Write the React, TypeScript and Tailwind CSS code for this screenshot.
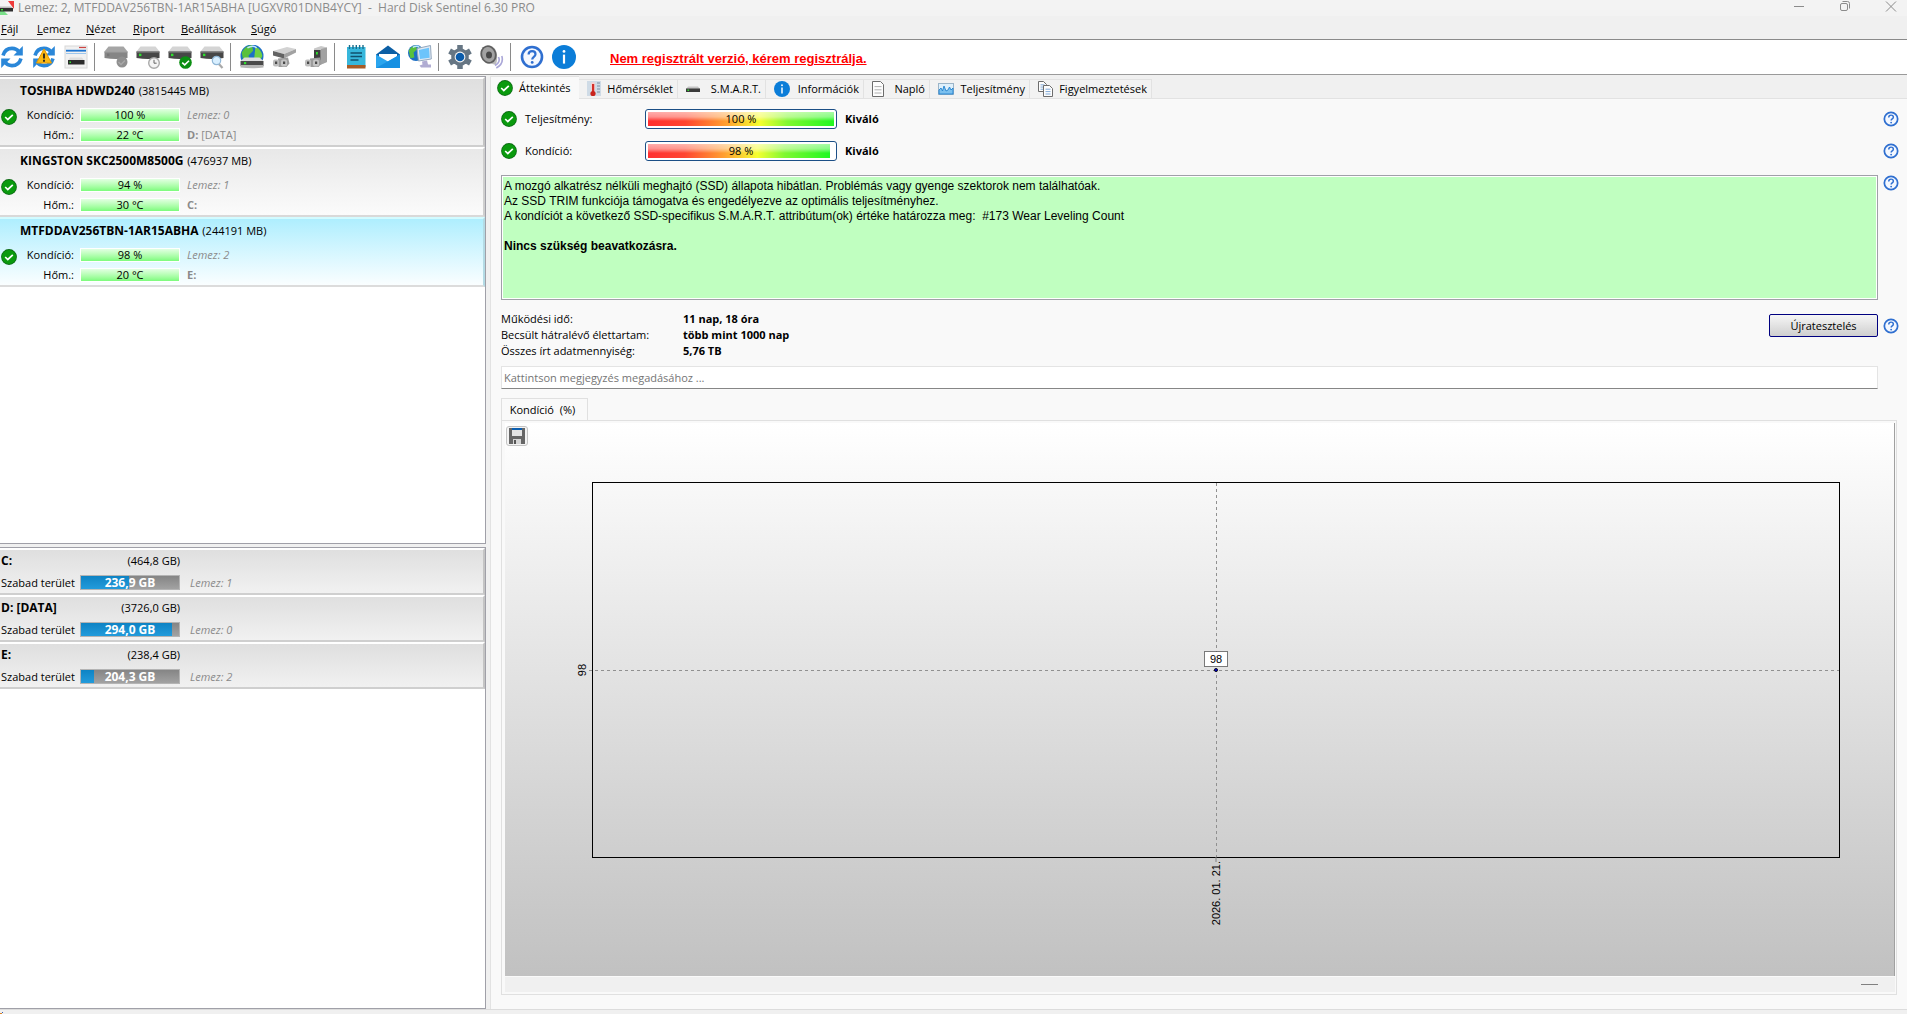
import React from 'react';

type Disk = {
  name: string;
  size: string;
  health: string;
  temp: string;
  index: number;
  letter: string;
  volume?: string;
  tone: string;
};

const disks: Disk[] = [
  { name: 'TOSHIBA HDWD240', size: '3815445 MB', health: '100 %', temp: '22 °C', index: 0, letter: 'D:', volume: '[DATA]', tone: 'from-[#dfdfdf] to-[#f1f1f1] border-b-[#cfcfcf] border-r-[#c4c4c4] border-t-white' },
  { name: 'KINGSTON SKC2500M8500G', size: '476937 MB', health: '94 %', temp: '30 °C', index: 1, letter: 'C:', tone: 'from-[#e8e8e8] to-[#fbfbfb] border-b-[#d9d9d9] border-r-[#cfcfcf] border-t-white' },
  { name: 'MTFDDAV256TBN-1AR15ABHA', size: '244191 MB', health: '98 %', temp: '20 °C', index: 2, letter: 'E:', tone: 'from-[#aeeefe] to-[#fafeff] border-b-[#dcdcdc] border-r-[#b4dbe5] border-t-[#d3fbff]' },
];

const volumes = [
  { name: 'C:', size: '(464,8 GB)', free: '236,9 GB', index: 1, fill: 49 },
  { name: 'D: [DATA]', size: '(3726,0 GB)', free: '294,0 GB', index: 0, fill: 93 },
  { name: 'E:', size: '(238,4 GB)', free: '204,3 GB', index: 2, fill: 13 },
];

const menus = [
  { key: 'F', rest: 'ájl', width: 'w-9' },
  { key: 'L', rest: 'emez', width: 'w-[49px]' },
  { key: 'N', rest: 'ézet', width: 'w-[47px]' },
  { key: 'R', rest: 'iport', width: 'w-12' },
  { key: 'B', rest: 'eállítások', width: 'w-[70px]' },
  { key: 'S', rest: 'úgó', width: 'w-9' },
];

const CheckIcon: React.FC<{ className?: string }> = ({ className = '' }) => (
  <svg viewBox="0 0 16 16" className={`h-4 w-4 shrink-0 ${className}`}>
    <circle cx="8" cy="8" r="7.9" fill="#0c6b14" />
    <circle cx="8" cy="8" r="7.1" fill="#0a9a0e" />
    <path d="M4.2 8l2.6 2.5 5-4.6" fill="none" stroke="#fff" strokeWidth="1.7" />
  </svg>
);

const HelpIcon: React.FC<{ className?: string }> = ({ className = 'h-4 w-4' }) => (
  <svg viewBox="0 0 24 24" className={className}>
    <circle cx="12" cy="12" r="10" fill="#f4f8ff" stroke="#2f6fd0" strokeWidth="2.6" />
    <path d="M8.6 9.6c0-2.1 1.5-3.4 3.5-3.4s3.4 1.2 3.4 3c0 2.6-3.3 2.7-3.3 5.2" fill="none" stroke="#2f6fd0" strokeWidth="2.2" />
    <circle cx="12.2" cy="17.4" r="1.4" fill="#2f6fd0" />
  </svg>
);

const InfoIcon: React.FC<{ className?: string }> = ({ className = 'h-4 w-4' }) => (
  <svg viewBox="0 0 24 24" className={className}>
    <circle cx="12" cy="12" r="12" fill="#0b7dd8" />
    <circle cx="12" cy="6.4" r="1.4" fill="#fff" />
    <path d="M12 9.6v9" stroke="#fff" strokeWidth="2.2" />
  </svg>
);

const Arrows = () => (
  <g fill="none" stroke="#2b87d8" strokeWidth="3.6">
    <path d="M3 10.5C4.4 5.6 8 3.4 12 3.4c3 0 5.6 1.3 7.2 3.8" />
    <path d="M21 13.5c-1.4 4.9-5 7.1-9 7.1-3 0-5.6-1.3-7.2-3.8" />
    <path d="M22.8 1v9.5h-9.3z" fill="#2b87d8" stroke="none" />
    <path d="M1.2 23v-9.5h9.3z" fill="#2b87d8" stroke="none" />
  </g>
);

const Drive = ({ grey = false }: { grey?: boolean }) => (
  <g>
    <path d="M4.5 1.5h15l4 5h-23z" fill={grey ? '#a5a5a5' : '#d4d4d4'} />
    <path d="M.5 6.5h23v6.5q-11.5 2.2-23 0z" fill={grey ? '#858585' : '#474747'} />
    <path d="M.5 6.5h23v1.2h-23z" fill={grey ? '#999' : '#777'} />
    <rect x="3" y="8.7" width="2.4" height="2.4" fill={grey ? '#777' : '#2fe02f'} />
  </g>
);

const Globe = ({ cx = 12, cy = 9.5, r = 9.5 }) => (
  <g>
    <circle cx={cx} cy={cy} r={r} fill="#1d6fc4" />
    <path d={`M${cx - r * 0.9} ${cy - r * 0.3}q${r * 0.3} ${-r * 0.6} ${r * 0.9} ${-r * 0.65}l${r * 0.1} ${r * 0.5}l${-r * 0.4} ${r * 0.4}l${r * 0.1} ${r * 0.6}l${-r * 0.5} ${r * 0.1}z`} fill="#59c13c" />
    <path d={`M${cx + r * 0.3} ${cy - r * 0.8}q${r * 0.5} ${r * 0.2} ${r * 0.6} ${r * 0.8}l${-r * 0.3} ${r * 0.6}l${-r * 0.4} ${-r * 0.5}z`} fill="#6fd043" />
    <path d={`M${cx - r * 0.4} ${cy - r * 0.7}q${r * 0.5} ${-r * 0.3} ${r * 0.8} 0`} stroke="#bfe6ff" strokeWidth="1.5" fill="none" />
  </g>
);

const Usb = () => (
  <g>
    <path d="M6 13.5l10-1 1.5 6-3 3.5h-8z" fill="#9c9c9c" />
    <rect x="1" y="14.5" width="6" height="7" rx="2" fill="#bdbdbd" />
    <rect x="9" y="14.5" width="6" height="7" rx="2" fill="#c4c4c4" />
    <rect x="3" y="16.5" width="2.2" height="2.5" fill="#4a4a4a" />
    <rect x="11" y="16.5" width="2.2" height="2.5" fill="#4a4a4a" />
  </g>
);

const toolGroups: { label: string; art: React.ReactNode }[][] = [
  [
    { label: 'Frissítés', art: <Arrows /> },
    {
      label: 'Figyelmeztetés frissítése',
      art: (
        <>
          <Arrows />
          <path d="M12 4l7.5 14h-15z" fill="#fdb913" stroke="#e79a00" strokeWidth="1" strokeLinejoin="round" />
          <path d="M12 8.5v5M12 14.8v2" stroke="#222" strokeWidth="1.8" />
        </>
      ),
    },
    {
      label: 'Panel',
      art: (
        <>
          <rect x="1" y="1" width="22" height="22" fill="#f1f1f1" stroke="#d8d8d8" />
          <path d="M15 2.5h7" stroke="#c44" strokeWidth="1.2" />
          <path d="M2 5.7h20" stroke="#1c74d0" strokeWidth="1.8" />
          <path d="M2 8.5h20" stroke="#9cc6ee" strokeWidth="1" />
          <path d="M6 12.5h12l2 3h-16z" fill="#ddd" />
          <rect x="4" y="15" width="16.5" height="4.5" fill="#2c2c2c" />
          <rect x="5.5" y="16.5" width="1.5" height="1.5" fill="#2fe02f" />
        </>
      ),
    },
  ],
  [
    {
      label: 'Lemez',
      art: (
        <>
          <Drive grey />
          <circle cx="18" cy="17" r="5.5" fill="#8f8f8f" />
          <path d="M14.5 17l2.5 2.5 4-4" stroke="#a8a8a8" strokeWidth="1.5" fill="none" />
        </>
      ),
    },
    {
      label: 'Időzített teszt',
      art: (
        <>
          <Drive />
          <circle cx="18" cy="18" r="5.3" fill="#f4f4f4" stroke="#a9a9a9" strokeWidth="1.4" />
          <path d="M18 14.8v3.4h2.6" stroke="#666" fill="none" />
        </>
      ),
    },
    {
      label: 'Gyors teszt',
      art: (
        <>
          <Drive />
          <circle cx="17.5" cy="17.5" r="6.3" fill="#0b8f12" />
          <path d="M14.2 17.6l2.5 2.3 4.3-4.2" stroke="#fff" strokeWidth="1.6" fill="none" />
        </>
      ),
    },
    {
      label: 'Felület teszt',
      art: (
        <>
          <Drive />
          <path d="M18.5 18.5l4 4.5" stroke="#a9a9a9" strokeWidth="2.2" />
          <circle cx="16.5" cy="15.5" r="4.2" fill="#d8efff" stroke="#8fb6d6" strokeWidth="1.2" />
        </>
      ),
    },
  ],
  [
    {
      label: 'Hálózat',
      art: (
        <>
          <Globe cx={12} cy={11} r={11.5} />
          <path d="M4.5 12.5h15l4 3.500h-23z" fill="#dcdcdc" />
          <path d="M.5 16h23v5h-23z" fill="#4a4a4a" />
          <path d="M.5 20h23v2.5q-11.5 1.5-23 0z" fill="#b5b5b5" />
          <rect x="4" y="17" width="2.2" height="2.2" fill="#2fe02f" />
        </>
      ),
    },
    {
      label: 'USB lemez',
      art: (
        <>
          <path d="M1 6l14-4 9 2-12 5z" fill="#d2d2d2" />
          <path d="M1 6l11 3v4.5l-11-3z" fill="#636363" />
          <path d="M12 9l12-5v3.5l-12 6z" fill="#a2a2a2" />
          <Usb />
        </>
      ),
    },
    {
      label: 'Külső lemez',
      art: (
        <>
          <path d="M10 3.5l7-2.5 6 1.5v14.5l-7 3-6-3z" fill="#c9c9c9" />
          <path d="M17 4l6-1.5v14.5l-7 3z" fill="#a2a2a2" />
          <rect x="10" y="5" width="6.5" height="10.5" fill="#3f3f3f" />
          <rect x="12" y="7" width="1.8" height="2.5" fill="#2fe02f" />
          <Usb />
        </>
      ),
    },
  ],
  [
    {
      label: 'Riport',
      art: (
        <>
          <rect x="3" y="2" width="18.5" height="20" fill="#37b7dc" />
          <rect x="3" y="20" width="18.5" height="3.5" fill="#a85b26" />
          <path d="M5.5 0v4M9 0v4M12.3 0v4M15.6 0v4M19 0v4" stroke="#1b6d8c" strokeWidth="1.4" />
          <path d="M6.5 8h11.5M6.5 11.5h11.5M6.5 15h8" stroke="#11516d" strokeWidth="1.5" />
        </>
      ),
    },
    {
      label: 'Levél küldése',
      art: (
        <>
          <path d="M0 9.5l12-9 12 9v4h-24z" fill="#0c5fa5" />
          <path d="M3 9h18v6h-18z" fill="#fff" />
          <path d="M0 9.5l12 7 12-7v13.5h-24z" fill="#2aa5ee" />
          <path d="M0 23l24-13.5v13.5z" fill="#1690e2" />
        </>
      ),
    },
    {
      label: 'Távoli elérés',
      art: (
        <>
          <Globe cx={8} cy={8} r={8} />
          <path d="M9 3.5l13.5-3 .8 13.5-12.8 2z" fill="#dfe9f4" stroke="#93a7bd" />
          <path d="M10.8 5l10.2-2.3.7 10-9.7 1.3z" fill="#6cc4fb" />
          <path d="M14 16.5l5-1 1 4h3v3h-10l-1.5-2 3-1z" fill="#b0acd2" />
        </>
      ),
    },
  ],
  [
    {
      label: 'Beállítások',
      art: (
        <>
          <circle cx="12" cy="12" r="8.8" fill="#667684" />
          <g stroke="#667684" strokeWidth="5.5">
            <path d="M12 0v24M1.6 6l20.8 12M1.6 18l20.8-12" />
          </g>
          <circle cx="12" cy="12" r="5.4" fill="#f5f5f5" />
          <circle cx="12" cy="12" r="4.3" fill="#0b5cab" />
        </>
      ),
    },
    {
      label: 'Hang',
      art: (
        <>
          <path d="M10 1c6 1 9 8 6 19l-7-2z" fill="#bcbcbc" />
          <ellipse cx="8.5" cy="9.5" rx="8" ry="9.3" transform="rotate(-18 8.5 9.5)" fill="#5e5e5e" />
          <ellipse cx="8.5" cy="9.5" rx="6.3" ry="7.5" transform="rotate(-18 8.5 9.5)" fill="#a2a2a2" />
          <ellipse cx="9" cy="10" rx="3" ry="3.6" fill="#484848" />
          <path d="M18.5 12c1.5 3 .5 6-3.5 8.5M21.8 11c1.5 5 0 9-5.5 12" stroke="#aaa7d8" strokeWidth="1.6" fill="none" />
        </>
      ),
    },
  ],
];

const DriveSmall = () => (
  <svg viewBox="0 0 14 16" className="h-4 w-3.5">
    <path d="M2 5.5h10l2 2.5h-14z" fill="#c4c4c4" />
    <rect x="0" y="7.5" width="14" height="3.5" fill="#3b3b3b" />
    <rect x="1.5" y="8.5" width="1.5" height="1.5" fill="#2fe02f" />
  </svg>
);

const Page = ({ x = 0, y = 0, w = 12, h = 15, line = '#b0b0b0' }) => (
  <g>
    <path d={`M${x + 0.5} ${y + 0.5}h${w - 4}l3 3v${h - 4}h${-(w - 1)}z`} fill="#fdfdfd" stroke="#6d6d6d" />
    <path d={`M${x + 2.5} ${y + h * 0.35}h${w - 5}M${x + 2.5} ${y + h * 0.55}h${w - 5}M${x + 2.5} ${y + h * 0.75}h${w - 5}`} stroke={line} />
  </g>
);

const tabs = [
  {
    label: 'Hőmérséklet',
    width: 'w-[99px]',
    icon: (
      <svg viewBox="0 0 14 16" className="h-4 w-3.5">
        <rect x="0" y="0" width="14" height="15" fill="#cfdbe6" />
        <path d="M10 2h3M10 5h3M10 8h3M10 11h3" stroke="#7a8ea3" />
        <rect x="4" y="1" width="4" height="10" rx="2" fill="#f4d0d0" />
        <rect x="5" y="3" width="2.2" height="9" fill="#d3302a" />
        <circle cx="6" cy="12.5" r="2.6" fill="#c9241e" />
      </svg>
    ),
  },
  { label: 'S.M.A.R.T.', width: 'w-[88px]', icon: <DriveSmall /> },
  { label: 'Információk', width: 'w-[98px]', icon: <InfoIcon /> },
  {
    label: 'Napló',
    width: 'w-[66px]',
    icon: (
      <svg viewBox="0 0 13 16" className="h-4 w-[13px]">
        <Page w={12} h={16} />
      </svg>
    ),
  },
  {
    label: 'Teljesítmény',
    width: 'w-[100px]',
    icon: (
      <svg viewBox="0 0 16 16" className="h-4 w-4">
        <rect x="0.5" y="2.5" width="15" height="11" fill="#dff0fb" stroke="#9bb4c8" />
        <path d="M1 13v-4l2-2 1.5 3 1.5-5 2 5 2-1 1.5-3 1.5 3 2-2v6z" fill="#7cc0ee" stroke="#2382cf" strokeWidth="0.9" />
      </svg>
    ),
  },
  {
    label: 'Figyelmeztetések',
    width: 'w-[122px]',
    icon: (
      <svg viewBox="0 0 15 16" className="h-4 w-[15px]">
        <Page w={9} h={11} line="#7fa9d8" />
        <Page x={5} y={4} w={10} h={12} line="#7fa9d8" />
      </svg>
    ),
  },
];

const TitleBar: React.FC = () => (
  <header className="flex h-4 items-center bg-[#f3f3f3] text-[#8b8b8b]">
    <svg viewBox="0 0 14 14" className="h-3.5 w-3.5">
      <path d="M0 0h14v14z" fill="#ef3b3b" />
      <path d="M0 0v14h14z" fill="#7be08a" />
      <path d="M0 0h8l6 8v6h-6l-8-8z" fill="#f4f4f4" />
      <path d="M0 5.5h11l2 2h-13z" fill="#bbb" />
      <rect x="0" y="7" width="13" height="3.5" fill="#2e2e2e" />
      <rect x="1" y="8" width="2" height="1.5" fill="#2fe02f" />
    </svg>
    <h1 className="ml-1 flex-1 whitespace-pre text-xs leading-4">
      {'Lemez: 2, MTFDDAV256TBN-1AR15ABHA [UGXVR01DNB4YCY]  -  Hard Disk Sentinel 6.30 PRO'}
    </h1>
    <div className="flex gap-[30px] pr-2">
      <button aria-label="Kis méret" className="h-4 w-4">
        <svg viewBox="0 0 16 16" className="h-4 w-4"><path d="M3 6.5h10" stroke="#8b8b8b" /></svg>
      </button>
      <button aria-label="Előző méret" className="h-4 w-4">
        <svg viewBox="0 0 16 16" className="h-4 w-4" fill="none" stroke="#8b8b8b">
          <rect x="3.5" y="3.5" width="7" height="7" rx="1.5" />
          <path d="M5.5 1.5h5q2 0 2 2v5" />
        </svg>
      </button>
      <button aria-label="Bezárás" className="h-4 w-4">
        <svg viewBox="0 0 16 16" className="h-4 w-4"><path d="M3 1.5l10 10M13 1.5l-10 10" stroke="#8b8b8b" /></svg>
      </button>
    </div>
  </header>
);

const Toolbar: React.FC = () => (
  <div className="flex h-[35px] items-center border-t border-[#8a8a8a] bg-white">
    {toolGroups.map((group, i) => (
      <React.Fragment key={i}>
        <div className="flex gap-2">
          {group.map((tool) => (
            <button key={tool.label} aria-label={tool.label} className="h-6 w-6">
              <svg viewBox="0 0 24 24" className="h-6 w-6">{tool.art}</svg>
            </button>
          ))}
        </div>
        <span className="mr-[9px] ml-[6px] h-7 w-px bg-[#8a8a8a]" />
      </React.Fragment>
    ))}
    <div className="flex gap-2">
      <button aria-label="Súgó" className="h-6 w-6"><HelpIcon className="h-6 w-6" /></button>
      <button aria-label="Névjegy" className="h-6 w-6"><InfoIcon className="h-6 w-6" /></button>
    </div>
    <a href="#register" className="ml-[34px] pt-1 font-[Liberation_Sans,sans-serif] text-[13px] font-bold text-[#ff0000] underline">
      Nem regisztrált verzió, kérem regisztrálja.
    </a>
  </div>
);

const Meter: React.FC<{ value: string }> = ({ value }) => (
  <span className="flex h-3.5 w-[100px] items-center justify-center border border-white bg-linear-to-b from-[#e2ffe2] to-[#7cfb7c]">{value}</span>
);

const DiskRow: React.FC<{ disk: Disk }> = ({ disk }) => (
  <li className={`h-[70px] border-t-2 border-r-2 border-b-2 bg-linear-to-b ${disk.tone}`}>
    <p className="pl-5 leading-6 whitespace-nowrap">
      <b className="mr-px text-xs leading-6">{disk.name}</b> ({disk.size})
    </p>
    <div className="flex items-start pt-0.5 pl-px">
      <CheckIcon className="mt-1" />
      <div className="w-full">
        {[
          ['Kondíció:', disk.health],
          ['Hőm.:', disk.temp],
        ].map(([label, value], i) => (
          <div key={label} className="flex h-5 items-center">
            <span className="mr-1.5 w-[57px] text-right whitespace-nowrap">{label}</span>
            <Meter value={value} />
            {i === 0 ? (
              <i className="ml-[7px] text-[#8a8a8a]">Lemez: {disk.index}</i>
            ) : (
              <span className="ml-[7px] text-[#8a8a8a]"><b>{disk.letter}</b> {disk.volume}</span>
            )}
          </div>
        ))}
      </div>
    </div>
  </li>
);

const Sidebar: React.FC = () => (
  <aside className="flex w-[486px] shrink-0 flex-col">
    <ul className="h-[468px] border-y border-r border-[#a0a0a8] bg-white">
      {disks.map((disk) => (
        <DiskRow key={disk.name} disk={disk} />
      ))}
    </ul>
    <ul className="mt-[3px] flex-1 border-y border-r border-[#a0a0a8] bg-white">
      {volumes.map((vol) => (
        <li key={vol.name} className="h-[47px] border-t-2 border-r-2 border-b-2 border-t-white border-r-[#c4c4c4] border-b-[#cfcfcf] bg-linear-to-b from-[#dfdfdf] to-[#f1f1f1] pl-px">
          <div className="flex h-[22px] w-[179px] items-center justify-between">
            <b className="text-xs">{vol.name}</b>
            <span>{vol.size}</span>
          </div>
          <div className="flex h-[21px] items-center">
            <span className="w-[79px] whitespace-nowrap">Szabad terület</span>
            <span className="relative flex h-[15px] w-[100px] items-center justify-center border border-[#b4b4b4] bg-linear-to-b from-[#858585] to-[#a2a2a2]">
              <span className="absolute inset-y-0 left-0 bg-linear-to-b from-[#0d83c4] to-[#229bdb]" style={{ width: `${vol.fill}%` }} />
              <b className="relative text-xs text-white">{vol.free}</b>
            </span>
            <i className="ml-2.5 text-[#8a8a8a]">Lemez: {vol.index}</i>
          </div>
        </li>
      ))}
    </ul>
  </aside>
);

const ScoreRow: React.FC<{ label: string; value: number }> = ({ label, value }) => (
  <div className="flex h-8 items-center">
    <CheckIcon />
    <span className="ml-2 w-[120px]">{label}</span>
    <span className="relative flex h-5 w-48 items-center justify-center rounded-[3px] border border-[#1c4f86] bg-white">
      <span className="absolute inset-y-0.5 right-0.5 left-0.5">
        <span
          className="block h-full bg-[linear-gradient(to_bottom,rgba(255,255,255,.6),rgba(255,255,255,.45)_35%,rgba(255,255,255,0)_65%),linear-gradient(to_right,#ff3030,#ff4530_20%,#ffa030_42%,#f6ff30_60%,#80f830_75%,#20f820)]"
          style={{ width: `${value}%` }}
        />
      </span>
      <span className="relative">{value} %</span>
    </span>
    <b className="ml-2 flex-1">Kiváló</b>
    <button aria-label={`Súgó: ${label}`}><HelpIcon /></button>
  </div>
);

const Chart: React.FC = () => (
  <div className="flex flex-1 flex-col border-r border-[#a0a0a0] bg-linear-to-b from-white to-[#c1c1c1] px-px pt-[3px]">
    <button aria-label="Mentés" className="flex h-5 w-[22px] items-center justify-center rounded-[3px] border border-[#c4c4c4] bg-[#f3f3f3]">
      <svg viewBox="0 0 16 16" className="h-4 w-4">
        <rect width="16" height="16" fill="#666" />
        <rect x="3" y="0" width="10" height="2" fill="#0c5fb0" />
        <rect x="3" y="2" width="10" height="6" fill="#e4e4e4" />
        <rect x="4" y="11" width="8" height="5" fill="#d5d5d5" />
        <rect x="5" y="12" width="2" height="4" fill="#555" />
      </svg>
    </button>
    <div className="mt-9 mr-[53px] mb-[118px] ml-[86px] flex-1 border border-black">
      <svg className="h-full w-full overflow-visible font-[Liberation_Sans,sans-serif] text-[11px]">
        <line x1="-4" y1="50%" x2="100%" y2="50%" stroke="#909090" strokeDasharray="3 3" shapeRendering="crispEdges" />
        <line x1="50%" y1="0" x2="50%" y2="100%" stroke="#909090" strokeDasharray="3 3" shapeRendering="crispEdges" />
        <svg x="50%" y="50%" className="overflow-visible">
          <rect x="-11.5" y="-18.5" width="23" height="15" fill="#fff" stroke="#000" strokeDasharray="1 1" />
          <text x="0" y="-7" textAnchor="middle">98</text>
          <circle r="1.6" fill="#0000c8" stroke="#000" strokeWidth="0.8" />
        </svg>
        <svg x="0" y="50%" className="overflow-visible">
          <text transform="rotate(-90)" x="0" y="-7" textAnchor="middle">98</text>
        </svg>
        <svg x="50%" y="100%" className="overflow-visible">
          <path d="M0 0v5" stroke="#808080" />
          <text transform="rotate(-90)" x="-4" y="4" textAnchor="end">2026. 01. 21.</text>
        </svg>
      </svg>
    </div>
  </div>
);

const Overview: React.FC = () => (
  <section className="flex flex-1 flex-col border-l border-[#e2e2e2] bg-[#f9f9f9] pt-1 pr-2 pb-3.5 pl-2.5">
    <ScoreRow label="Teljesítmény:" value={100} />
    <ScoreRow label="Kondíció:" value={98} />
    <div className="mt-2 flex items-start">
      <div className="h-[125px] flex-1 border border-[#a0a0a8] bg-[#c0ffc0] px-0.5 pt-[3px] font-[Liberation_Sans,sans-serif] text-xs leading-[15px] whitespace-pre outline-1 -outline-offset-2 outline-white">
        <p>A mozgó alkatrész nélküli meghajtó (SSD) állapota hibátlan. Problémás vagy gyenge szektorok nem találhatóak.</p>
        <p>Az SSD TRIM funkciója támogatva és engedélyezve az optimális teljesítményhez.</p>
        <p>{'A kondíciót a következő SSD-specifikus S.M.A.R.T. attribútum(ok) értéke határozza meg:  #173 Wear Leveling Count'}</p>
        <p className="mt-[15px] font-bold">Nincs szükség beavatkozásra.</p>
      </div>
      <button aria-label="Súgó: állapot" className="ml-[5px]"><HelpIcon /></button>
    </div>
    <div className="mt-[11px] flex items-start">
      <dl className="grid flex-1 grid-cols-[182px_1fr] leading-4">
        <dt>Működési idő:</dt>
        <dd className="font-bold">11 nap, 18 óra</dd>
        <dt>Becsült hátralévő élettartam:</dt>
        <dd className="font-bold">több mint 1000 nap</dd>
        <dt>Összes írt adatmennyiség:</dt>
        <dd className="font-bold">5,76 TB</dd>
      </dl>
      <div className="mt-[3px] flex items-center">
        <button className="h-[23px] w-[109px] rounded-[2px] border border-[#000080] bg-linear-to-b from-[#f6f6f6] to-[#cfcfcf]">Újratesztelés</button>
        <button aria-label="Súgó: teszt" className="ml-[5px]"><HelpIcon /></button>
      </div>
    </div>
    <input
      aria-label="Megjegyzés"
      placeholder="Kattintson megjegyzés megadásához ..."
      className="mt-[7px] mr-[21px] h-[23px] border border-[#e4e4e4] border-b-[#868686] bg-white px-0.5 placeholder:text-[#757575]"
    />
    <div className="mt-[9px] flex">
      <button className="-mb-px h-[23px] w-[87px] border border-b-0 border-[#e0e0e0] bg-[#f9f9f9] pr-1 whitespace-pre">{'Kondíció  (%)'}</button>
    </div>
    <div className="mr-0.5 flex flex-1 flex-col border border-[#e0e0e0] pt-0.5 pr-px pb-0.5 pl-[3px]">
      <Chart />
      <div className="mt-px flex h-[15px] items-center justify-end bg-[#f0f0f0] pr-[17px]">
        <span className="h-px w-[17px] bg-[#808080]" />
      </div>
    </div>
  </section>
);

const App: React.FC = () => {
  return (
    <div className="flex min-h-screen flex-col bg-[#f0f0f0] font-[Open_Sans,Noto_Sans,sans-serif] text-[11px] leading-4 text-black">
      <TitleBar />
      <nav className="flex h-[23px] items-center bg-[#f0f0f0] pt-0.5 pl-px">
        {menus.map((menu) => (
          <button key={menu.key} className={`text-left ${menu.width}`}>
            <u>{menu.key}</u>{menu.rest}
          </button>
        ))}
      </nav>
      <Toolbar />
      <div className="h-0.5 border-t border-[#9a9a9a]" />
      <main className="flex flex-1">
        <Sidebar />
        <div className="flex min-w-0 flex-1 flex-col pl-1">
          <div className="flex h-[23px] items-end" role="tablist">
            <button role="tab" aria-selected="true" className="flex h-[23px] w-[89px] items-center border-t border-l border-[#e2e2e2] bg-[#f9f9f9] pt-1 pb-1 pl-1.5">
              <CheckIcon />
              <span className="ml-1.5">Áttekintés</span>
            </button>
            {tabs.map((tab) => (
              <button key={tab.label} role="tab" aria-selected="false" className={`flex h-5 items-center justify-between border-t border-r border-b border-[#e2e2e2] bg-[#f2f2f2] pr-1 pl-2 whitespace-nowrap ${tab.width}`}>
                {tab.icon}
                <span>{tab.label}</span>
              </button>
            ))}
            <span className="flex-1 border-b border-[#e2e2e2]" />
          </div>
          <Overview />
        </div>
      </main>
      <footer className="flex h-[5px] items-end border-t border-[#dcdcdc]">
        <svg viewBox="0 0 4 2" className="h-0.5 w-1">
          <rect x="0" y="1" width="2" height="1" fill="#d9822b" />
          <rect x="2" y="0" width="1" height="1" fill="#3a5fa8" />
        </svg>
      </footer>
    </div>
  );
};

export default App;
